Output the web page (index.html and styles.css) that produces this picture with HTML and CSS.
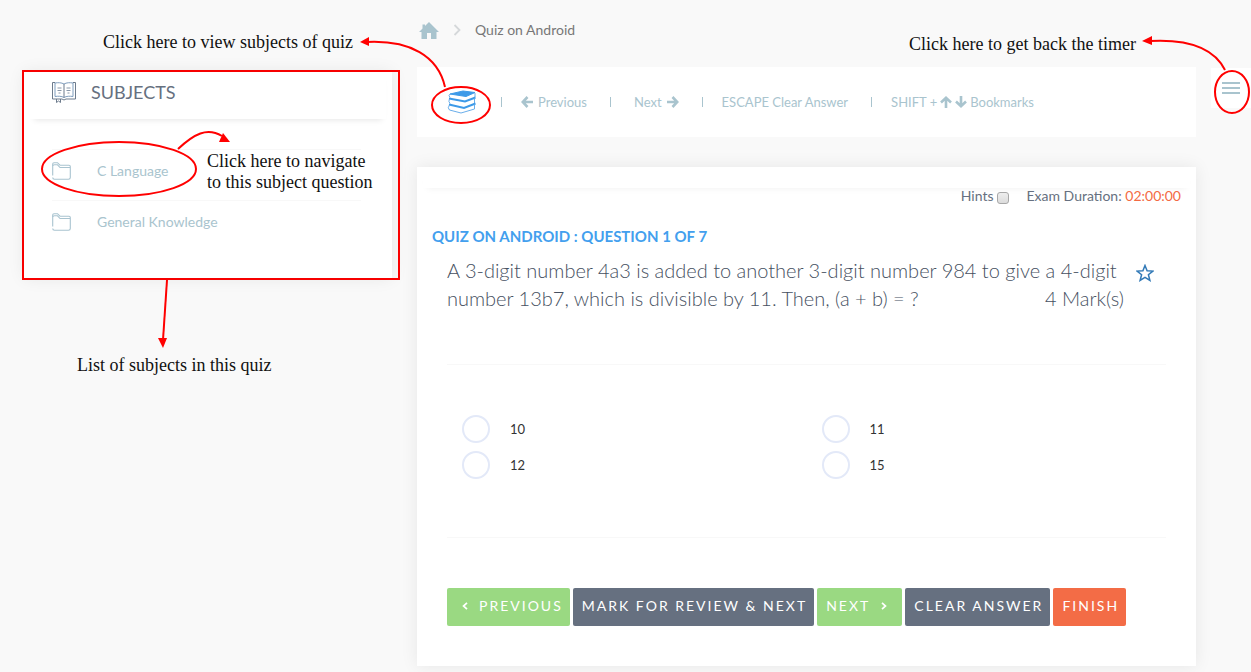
FILE: index.html
```html
<!DOCTYPE html>
<html lang="en">
<head>
<meta charset="utf-8">
<meta name="viewport" content="width=device-width, initial-scale=1">
<title>Quiz on Android</title>
<link rel="stylesheet" href="styles.css">
</head>
<body>
<div class="layout">
  <aside class="sidebar">
    <p class="note note-view">Click here to view subjects of quiz</p>
    <div class="callout-box">
      <section class="panel">
        <h2 class="panel-title">
          <svg class="book-icon" width="24" height="22" viewBox="0 0 24 22" fill="none" stroke="#6d7b8c" stroke-width="1">
            <path d="M3 2C6 1.500 9.500 1.500 12 3C14.500 1.500 18 1.500 21 2V15.500C18 15 14.500 15 12 16.500C9.500 15 6 15 3 15.500Z" stroke="#7f9dbd"/>
            <path d="M12 3V16.500M3 1.500H.5V18H10L12 19L14 18H23.500V1.500H21M4.500 18V21.500L6.500 20L8.500 21.500V18"/>
            <path d="M5.500 7H9.500M5.500 9.500H9.500M6.500 12H8.500M14.500 7H18.500M14.500 9.500H18.500M15.500 12H17.500" stroke="#8997a8"/>
          </svg>
          SUBJECTS
        </h2>
        <ul class="subjects">
          <li><a href="#">
            <svg class="folder-icon" width="19" height="18" viewBox="0 0 19 18" fill="none" stroke="#a9c4d0" stroke-width="1.100"><path d="M.7 13.500V2Q.7 .7 2 .7H5.500L8 3.200H17Q18.300 3.200 18.300 4.500V15.500Q18.300 17.200 16.500 17.200H2.500Q.7 17.200 .7 15.500"/><path d="M.7 4Q.7 2.800 2.500 2.800H5.500L8 5.500H18"/></svg>
            C Language</a></li>
          <li><a href="#">
            <svg class="folder-icon" width="19" height="18" viewBox="0 0 19 18" fill="none" stroke="#a9c4d0" stroke-width="1.100"><path d="M.7 13.500V2Q.7 .7 2 .7H5.500L8 3.200H17Q18.300 3.200 18.300 4.500V15.500Q18.300 17.200 16.500 17.200H2.500Q.7 17.200 .7 15.500"/><path d="M.7 4Q.7 2.800 2.500 2.800H5.500L8 5.500H18"/></svg>
            General Knowledge</a></li>
        </ul>
      </section>
      <p class="note note-navigate">Click here to navigate<br>to this subject question</p>
      <svg class="mark mark-sidebar" width="378" height="290" viewBox="22 70 378 290" fill="none" stroke="#f00" stroke-width="2">
        <ellipse cx="119" cy="169" rx="77" ry="27"/>
        <path d="M178 149C194 134 207 127 222 136"/>
        <path d="M219 142L223 133L230 142Z" fill="#f00" stroke="none"/>
        <path d="M167 280L163 340"/>
        <path d="M158 338H167L163 348Z" fill="#f00" stroke="none"/>
      </svg>
    </div>
    <p class="note note-list">List of subjects in this quiz</p>
  </aside>

  <main class="content">
    <nav class="breadcrumb" aria-label="Breadcrumb">
      <a href="#" aria-label="Home"><svg width="20" height="17" viewBox="0 0 20 17"><path d="M10 0L20 10H17.500V17H12V11H8V17H2.500V10H0L3.500 6.500V2.500H6V4Z" fill="#a9c4ce"/></svg></a>
      <svg width="8" height="12" viewBox="0 0 8 12" fill="none" stroke="#d5d8da" stroke-width="1.800"><path d="M1.500 1L6.500 6L1.500 11"/></svg>
      <span>Quiz on Android</span>
    </nav>

    <div class="toolbar">
      <button class="books" type="button" aria-label="View subjects">
        <svg width="30" height="24" viewBox="0 0 30 24" fill="none" stroke="#6aaeea" stroke-width="1">
          <path d="M3 4L16 1L28 2.500L19 6.500Z" fill="#3d9ae8" stroke="#3d9ae8"/>
          <path d="M3 4Q1 5.500 3 7.500M28 3V7"/>
          <path d="M2 8.500L18 11.500L28.500 7.500" stroke="#3d9ae8" stroke-width="2"/>
          <path d="M2.500 9Q1 11.500 3 13.500M27.500 8.500V13"/>
          <path d="M2 14.500L17 18L28.500 13.500" stroke="#3d9ae8" stroke-width="2"/>
          <path d="M2.500 15Q0 18 2.500 20L14 23L27.500 19V14.500"/>
        </svg>
      </button>
      <svg class="mark mark-books" width="140" height="90" viewBox="355 35 140 90" fill="none" stroke="#f00" stroke-width="2">
        <ellipse cx="461" cy="105" rx="29" ry="18"/>
        <path d="M367 42C410 40 438 56 445 87"/>
        <path d="M360 42L369 37V46Z" fill="#f00" stroke="none"/>
      </svg>
      <ul class="shortcuts">
        <li><svg width="12" height="12" viewBox="0 0 12 12" fill="none" stroke="#a9c4ce" stroke-width="2.600"><path d="M6.500 1L1.800 6L6.500 11M2 6H12"/></svg> Previous</li>
        <li class="shortcut-next">Next <svg width="12" height="12" viewBox="0 0 12 12" fill="none" stroke="#a9c4ce" stroke-width="2.600"><path d="M5.500 1L10.200 6L5.500 11M10 6H0"/></svg></li>
        <li>ESCAPE Clear Answer</li>
        <li class="shortcut-marks">SHIFT + <svg width="12" height="12" viewBox="0 0 12 12" fill="none" stroke="#a9c4ce" stroke-width="2.600"><path d="M1 6.500L6 1.800L11 6.500M6 2V12"/></svg><svg width="12" height="12" viewBox="0 0 12 12" fill="none" stroke="#a9c4ce" stroke-width="2.600"><path d="M1 5.500L6 10.200L11 5.500M6 10V0"/></svg> Bookmarks</li>
      </ul>
    </div>

    <section class="card">
      <div class="card-strip"></div>
      <div class="exam-info">
        <label class="hints">Hints <input type="checkbox"></label>
        <span>Exam Duration: <span class="timer">02:00:00</span></span>
      </div>
      <h1 class="quiz-title">QUIZ ON ANDROID : QUESTION 1 OF 7</h1>
      <div class="question">
        <div class="question-text">
          <p>A 3-digit number 4a3 is added to another 3-digit number 984 to give a <span class="term">4-digit</span> number 13b7, which is divisible by 11. Then, (a + b) = ?</p>
          <p class="marks">4 Mark(s)</p>
        </div>
        <button class="star" type="button" aria-label="Bookmark question"><svg width="18" height="18" viewBox="0 0 18 18" fill="none" stroke="#337ab7" stroke-width="1.500"><path d="M9 1.500L11.100 6.800L16.900 7.100L12.400 10.700L13.900 16.400L9 13.300L4.100 16.400L5.600 10.700L1.100 7.100L6.900 6.800Z"/></svg></button>
      </div>
      <div class="options">
        <label><input type="radio" name="answer">10</label>
        <label><input type="radio" name="answer">11</label>
        <label><input type="radio" name="answer">12</label>
        <label><input type="radio" name="answer">15</label>
      </div>
      <div class="actions">
        <button class="btn btn-green btn-prev" type="button"><svg width="6" height="8" viewBox="0 0 6 8" fill="none" stroke="#fff" stroke-width="1.700"><path d="M5 .8L1.500 4L5 7.200"/></svg>PREVIOUS</button>
        <button class="btn btn-slate" type="button">MARK FOR REVIEW &amp; NEXT</button>
        <button class="btn btn-green btn-next" type="button">NEXT<svg width="6" height="8" viewBox="0 0 6 8" fill="none" stroke="#fff" stroke-width="1.700"><path d="M1 .8L4.500 4L1 7.200"/></svg></button>
        <button class="btn btn-slate" type="button">CLEAR ANSWER</button>
        <button class="btn btn-orange" type="button">FINISH</button>
      </div>
    </section>
  </main>

  <div class="drawer">
    <p class="note note-timer">Click here to get back the timer</p>
    <button class="menu" type="button" aria-label="Show timer"><svg width="18" height="12" viewBox="0 0 18 12" stroke="#a9c4ce" stroke-width="2"><path d="M0 1H18M0 6H18M0 11H18"/></svg></button>
    <svg class="mark mark-menu" width="111" height="80" viewBox="1140 35 111 80" fill="none" stroke="#f00" stroke-width="2">
      <ellipse cx="1232" cy="92" rx="17" ry="21"/>
      <path d="M1150 41C1187 39 1214 48 1225 70"/>
      <path d="M1142 41L1152 36V45Z" fill="#f00" stroke="none"/>
    </svg>
  </div>
</div>
</body>
</html>
```

FILE: styles.css
```css
* {
  box-sizing: border-box;
}

body {
  margin: 0;
  background: #f9f9f9;
  color: #667080;
  font-family: Lato, "Open Sans", sans-serif;
  font-size: 14px;
  line-height: 20px;
}

p, h1, h2, ul {
  margin: 0;
  padding: 0;
}

ul {
  list-style: none;
}

a {
  color: inherit;
  text-decoration: none;
}

button {
  border: 0;
  padding: 0;
  background: none;
  font: inherit;
  cursor: pointer;
}

svg {
  flex: none;
}

.layout {
  display: grid;
  grid-template-columns: 380px minmax(0, 1fr) 40px;
  column-gap: 15px;
  padding: 0 0 6px 22px;
}

.sidebar {
  margin-right: 2px;
}

.note {
  color: #111;
  font-family: "Liberation Serif", serif;
  font-size: 18px;
  line-height: 21px;
}

.mark {
  position: absolute;
  pointer-events: none;
}

/* Sidebar */
.note-view {
  padding: 32px 0 17px 81px;
}

.callout-box {
  position: relative;
  border: 2px solid #f00;
}

.panel {
  margin-right: 6px;
  padding-bottom: 27px;
  background: #fff;
  box-shadow: 0 0 16px rgba(0, 0, 0, .08);
}

.panel-title {
  display: flex;
  align-items: center;
  gap: 15px;
  margin: 0 6px;
  padding: 0 22px 8px;
  height: 47px;
  box-shadow: 0 5px 6px -4px rgba(0, 0, 0, .1);
  font-size: 18px;
  font-weight: 400;
}

.subjects {
  padding: 30px 31px 0 28px;
}

.subjects li {
  height: 51px;
  border-top: 1px solid #f8f8f8;
}

.subjects a {
  display: flex;
  align-items: center;
  gap: 26px;
  height: 42px;
  color: #a9c4ce;
}

.note-navigate {
  position: absolute;
  top: 79px;
  left: 183px;
}

.mark-sidebar {
  top: -2px;
  left: -2px;
}

.note-list {
  padding: 75px 0 0 55px;
}

/* Breadcrumb and toolbar */
.breadcrumb {
  display: flex;
  align-items: center;
  gap: 14px;
  height: 67px;
  padding: 0 2px 7px;
  color: #777;
}

.breadcrumb a {
  display: flex;
}

.toolbar {
  position: relative;
  display: flex;
  align-items: center;
  height: 70px;
  padding-left: 30px;
  background: #fff;
}

.books {
  display: flex;
}

.mark-books {
  top: -32px;
  left: -62px;
}

.shortcuts {
  display: flex;
  align-items: center;
  padding-left: 24px;
  color: #a9c4ce;
  font-size: 13px;
  white-space: nowrap;
}

.shortcuts li {
  display: flex;
  align-items: center;
  gap: 5px;
  height: 10px;
  padding: 0 23px 0 19px;
  border-left: 1px solid #a9c4ce;
  line-height: 10px;
}

.shortcuts .shortcut-next {
  padding-left: 23px;
}

.shortcuts .shortcut-marks {
  gap: 3px;
}

/* Question card */
.card {
  margin-top: 30px;
  background: #fff;
  box-shadow: 0 0 16px rgba(0, 0, 0, .08);
}

.card-strip {
  height: 21px;
  margin: 0 6px;
  box-shadow: 0 5px 6px -4px rgba(0, 0, 0, .05);
}

.exam-info {
  display: flex;
  justify-content: flex-end;
  gap: 18px;
  padding: 0 15px;
  line-height: 16px;
}

.hints {
  display: flex;
  align-items: center;
  gap: 3px;
}

.hints input {
  appearance: none;
  width: 12px;
  height: 12px;
  margin: 4px 0 0;
  border: 1px solid #a8a8a8;
  border-radius: 3px;
  background: linear-gradient(#eee, #dcdcdc);
}

.timer {
  color: #f36a43;
}

.quiz-title {
  padding: 22px 15px 0;
  color: #439fee;
  font-size: 15px;
  font-weight: 700;
  line-height: 20px;
}

.question {
  display: flex;
  align-items: flex-start;
  gap: 12px;
  min-height: 119px;
  margin: 0 30px;
  padding: 10px 12px 0 0;
  border-bottom: 1px solid #f8f8f8;
  color: #465061;
  font-size: 20px;
  font-weight: 300;
  line-height: 28px;
}

.question-text {
  display: flex;
  flex: 1;
  justify-content: flex-end;
  align-items: flex-end;
}

.question-text p:first-child {
  flex: 1 1 0;
  margin-right: -78px;
}

.term,
.marks {
  white-space: nowrap;
}

.star {
  display: flex;
  padding-top: 8px;
}

.options {
  display: grid;
  grid-template-columns: 1fr 1fr;
  align-content: start;
  row-gap: 8px;
  min-height: 173px;
  margin: 0 30px;
  padding-top: 50px;
  border-bottom: 1px solid #f8f8f8;
  color: #333;
  font-size: 13px;
}

.options label {
  display: flex;
  align-items: center;
  gap: 20px;
  height: 28px;
  padding-left: 15px;
}

.options input {
  appearance: none;
  width: 28px;
  height: 28px;
  margin: 0;
  border: 2px solid #e3e9f8;
  border-radius: 50%;
}

.actions {
  display: flex;
  flex-wrap: wrap;
  gap: 3px;
  padding: 50px 30px 40px;
}

.btn {
  display: flex;
  align-items: center;
  height: 38px;
  padding: 0 7px 2px 9px;
  border-radius: 2px;
  color: #fff;
  font-size: 14px;
  letter-spacing: 2px;
}

.btn-green {
  gap: 11px;
  background: #9ad982;
}

.btn-prev {
  padding-left: 15px;
}

.btn-next {
  padding-right: 15px;
}

.btn-slate {
  background: #667080;
}

.btn-orange {
  background: #f36c46;
}

/* Timer drawer handle */
.drawer {
  position: relative;
  padding-top: 68px;
}

.menu {
  display: flex;
  justify-content: center;
  align-items: center;
  width: 40px;
  height: 40px;
  background: #fff;
}

.note-timer {
  position: absolute;
  top: 34px;
  right: 115px;
  white-space: nowrap;
}

.mark-menu {
  top: 35px;
  right: 0;
}
```
